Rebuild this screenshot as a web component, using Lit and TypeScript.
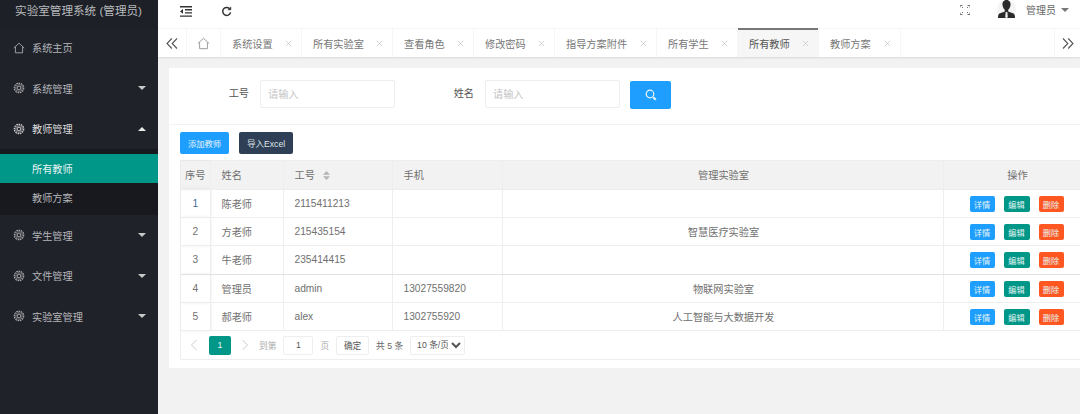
import { LitElement, html, css } from "lit";
import { customElement } from "lit/decorators.js";

const gear = html`<svg class="mi" viewBox="0 0 12 12" fill="none" stroke="currentColor">
  <circle cx="6" cy="6" r="1.9" stroke-width="1"/>
  <g stroke-width="1.2" stroke-dasharray="1.6 .75"><circle cx="6" cy="6" r="4.7"/></g>
  <circle cx="6" cy="6" r="3.4" stroke-width=".6"/>
</svg>`;
const home = html`<svg class="mi" viewBox="0 0 12 12" fill="none" stroke="currentColor" stroke-width=".9"><path d="M.8 6 6 1.2 11.2 6M2.400 5v5.800h7.200V5"/></svg>`;
const caret = (up = false) => html`<span class="caret ${up ? "up" : ""}"></span>`;
const x = html`<svg class="x" viewBox="0 0 8 8" stroke="#c8c8c8" stroke-width=".9"><path d="M1 1l6 6M7 1 1 7"/></svg>`;

const tabs = [
  ["系统设置", 81], ["所有实验室", 91], ["查看角色", 81], ["修改密码", 81],
  ["指导方案附件", 102], ["所有学生", 81], ["所有教师", 81], ["教师方案", 82],
] as [string, number][];

const rows = [
  ["1", "陈老师", "2115411213", "", ""],
  ["2", "方老师", "215435154", "", "智慧医疗实验室"],
  ["3", "牛老师", "235414415", "", ""],
  ["4", "管理员", "admin", "13027559820", "物联网实验室"],
  ["5", "郝老师", "alex", "1302755920", "人工智能与大数据开发"],
];

@customElement("app-root")
export class AppRoot extends LitElement {
  static styles = css`
    :host { display: block; width: 1080px; height: 414px; overflow: hidden; font-family: "Liberation Sans", "Noto Sans CJK SC", sans-serif; font-size: 10.2px; color: #666; }
    .shell { display: flex; height: 414px; }
    .side { width: 158px; flex: none; background: #20222a; color: #b4b5b8; }
    .brand { height: 27.5px; background: #1d2027; display: flex; align-items: center; justify-content: center; padding: 0 1px 7px 0; box-sizing: border-box; font-size: 11.6px; color: #b9babd; white-space: nowrap; }
    .mi { width: 12px; height: 12px; flex: none; color: #a9aaad; }
    .item { height: 40.5px; display: flex; align-items: center; padding: 0 11px 0 13px; gap: 7px; }
    .item.open { color: #dcdcdd; }
    .item.open .mi { color: #d0d0d0; }
    .item span.t { flex: 1; }
    .caret { width: 0; height: 0; border: 4.5px solid transparent; border-top-color: #c8c8c8; border-bottom: 0; margin-right: 1px; }
    .caret.up { border-top: 0; border-bottom: 4.5px solid #e8e8e8; }
    .sub { background: #18191f; padding: 5px 0 3px; }
    .sub div { height: 29px; display: flex; align-items: center; padding: 0 0 1px 32px; box-sizing: border-box; }
    .sub .on { background: #009688; color: #e8f4f2; }

    .main { width: 922px; flex: none; background: #f2f2f2; overflow: hidden; }
    .top { height: 28px; background: #fff; display: flex; align-items: center; }
    .top .left { display: flex; gap: 29px; padding: 0 0 5px 22px; align-items: center; }
    .top .right { margin-left: auto; display: flex; align-items: center; padding: 0 11px 9px 0; }
    .top svg { display: block; }
    .avatar { margin: 0 10px 0 27px; }
    .user { font-size: 10px; margin-right: 5px; color: #666; }
    .user-caret { width: 0; height: 0; border: 4px solid transparent; border-top-color: #777; border-bottom: 0; }

    .tabs { height: 29px; background: #fff; display: flex; box-shadow: 0 1px 2px rgba(0,0,0,.1); border-top: 1px solid #f6f6f6; box-sizing: border-box; }
    .arrow { width: 29px; flex: none; display: flex; align-items: center; justify-content: center; border-right: 1px solid #f6f6f6; box-sizing: border-box; }
    .tab-home { width: 34px; flex: none; display: flex; align-items: center; justify-content: center; border-right: 1px solid #f6f6f6; box-sizing: border-box; }
    .tab-home .mi { width: 13px; height: 13px; color: #999; }
    .tab { flex: none; box-sizing: border-box; display: flex; align-items: center; padding-left: 11px; border-right: 1px solid #f6f6f6; color: #777; white-space: nowrap; position: relative; }
    .tab .x { width: 7px; height: 7px; position: absolute; right: 9px; top: 11px; }
    .tab.on { background: #f6f6f6; color: #555; }
    .tab.on::before { content: ""; position: absolute; left: 0; right: 0; top: -1px; height: 2px; background: #777; }
    .spacer { flex: 1; }
    .arrow.r { width: 26px; border-right: 0; border-left: 1px solid #f6f6f6; }

    .card { width: 935px; height: 300px; margin: 11px 0 0 11px; background: #fff; box-sizing: border-box; padding-top: 12px; }
    .search { height: 44px; border-bottom: 1px solid #f2f2f2; display: flex; align-items: flex-start; }
    .lab { width: 91px; line-height: 27px; text-align: right; padding-right: 11px; box-sizing: border-box; color: #555; flex: none; }
    .lab.b { width: 90px; }
    input { box-sizing: border-box; font: inherit; border: 1px solid #eee; border-radius: 2px; outline: none; color: #555; background: #fff; }
    input::placeholder { color: #c4c4c4; }
    .inp { width: 135px; height: 28px; padding: 0 7px; flex: none; }
    .go { width: 41px; height: 28px; margin: 1px 0 0 10px; background: #1e9fff; border: 0; border-radius: 2px; display: flex; align-items: center; justify-content: center; padding: 0; }
    .tools { display: flex; gap: 10px; padding: 7px 0 0 11px; }
    .btn { height: 22px; display: flex; align-items: center; justify-content: center; border-radius: 2px; color: #e9f3fa; font-size: 8.3px; }
    .add { width: 49px; background: #1e9fff; }
    .imp { width: 54px; background: #2f4056; color: #dfe3e8; font-size: 8.6px; }

    .wrap { margin: 6px 0 0 11px; width: 913px; border: 1px solid #eee; border-right: 0; box-sizing: border-box; }
    table { border-collapse: collapse; table-layout: fixed; width: 911px; }
    th, td { border-bottom: 1px solid #eee; border-right: 1px solid #eee; height: 28.4px; padding: 0 0 0 11px; box-sizing: border-box; font-weight: 400; text-align: left; color: #707070; white-space: nowrap; }
    th { background: #f2f2f2; height: 28px; color: #6f6f6f; }
    tbody tr:nth-child(3) td { border-bottom: 1px solid #e2e2e2; }
    .c { text-align: center; padding: 0; }
    .lab-col { padding-left: 2px; }
    .first { box-shadow: 1px 0 3px rgba(0,0,0,.08); text-align: center; padding: 0; color: #707070; }
    tr:first-child .first { color: #3b6f95; }
    thead tr:first-child .first { color: #6f6f6f; }
    .sort { display: inline-block; vertical-align: -1px; margin-left: 8px; }
    .acts { padding: 1px 0 0; }
    .ops { display: flex; gap: 9px; padding-left: 26px; align-items: center; }
    .op { width: 25px; height: 16px; border-radius: 2px; color: #e6f4f2; font-size: 8.2px; display: flex; align-items: center; justify-content: center; }
    .op.i { background: #1e9fff; }
    .op.e { background: #009688; width: 26px; }
    .op.d { background: #ff5722; }

    .pager { height: 28px; display: flex; align-items: center; color: #888; font-size: 8.7px; padding-left: 24px; box-sizing: border-box; }
    .pg { width: 22px; height: 19px; background: #009688; color: #eaf6f4; border-radius: 2px; display: flex; align-items: center; justify-content: center; margin-right: 9px; }
    .chev { width: 8px; height: 12px; flex: none; }
    .chev.p { margin: 0 11px 0 -15px; }
    .chev.n { margin: 0 10px 0 1px; }
    .muted { color: #aaa; }
    .total { color: #666; }
    .pager input { width: 30px; height: 19px; text-align: center; margin: 0 7px; font-size: 8.7px; color: #555; padding: 0; }
    .ok { width: 33px; height: 19px; border: 1px solid #eee; border-radius: 2px; box-sizing: border-box; display: flex; align-items: center; justify-content: center; margin: 0 7px; color: #555; }
    select { width: 55px; height: 19px; margin-left: 7px; font: inherit; color: #555; background: #fff; border: 1px solid #eee; border-radius: 2px; outline: none; padding: 0 0 0 2px; }
  `;

  render() {
    return html`<div class="shell">
      <aside class="side">
        <div class="brand">实验室管理系统 (管理员)</div>
        <div class="item">${home}<span class="t">系统主页</span></div>
        <div class="item">${gear}<span class="t">系统管理</span>${caret()}</div>
        <div class="item open">${gear}<span class="t">教师管理</span>${caret(true)}</div>
        <div class="sub"><div class="on">所有教师</div><div>教师方案</div></div>
        <div class="item">${gear}<span class="t">学生管理</span>${caret()}</div>
        <div class="item">${gear}<span class="t">文件管理</span>${caret()}</div>
        <div class="item">${gear}<span class="t">实验室管理</span>${caret()}</div>
      </aside>
      <main class="main">
        <div class="top">
          <div class="left">
            <svg width="12" height="11" viewBox="0 0 12 11" fill="#333"><path d="M0 0h12v1.400H0zM5 3h7v1.400H5zM5 6.200h7v1.400H5zM0 9.400h12v1.400H0zM0 5.400 3 3v4.800z"/></svg>
            <svg width="11" height="11" viewBox="0 0 11 11" fill="none" stroke="#333" stroke-width="1.500"><path d="M9.200 3.400A4 4 0 1 0 9.600 6.400"/><path d="M9.800.8v3H6.800" fill="#333" stroke-width=".6"/></svg>
          </div>
          <div class="right">
            <svg width="10" height="10" viewBox="0 0 10 10" fill="none" stroke="#777"><path d="M0 2.500V.5h2.500M7.500.5H10v2M10 7.500v2H7.500M2.500 9.500H0v-2M2 2l1 1M8 2 7 3M8 8 7 7M2 8l1-1"/></svg>
            <svg class="avatar" width="19" height="21" viewBox="0 0 19 21"><circle cx="9.500" cy="10.500" r="9.500" fill="#f4f4f4"/><path d="M9.500 1c3 0 4.300 2.400 4 5-.2 2-1.200 4-2.300 4.800v1.600l5.300 2.200c1 .5 1.500 2 1.500 4.400H1c0-2.400.5-3.900 1.500-4.400l5.300-2.200v-1.600C6.700 10 5.700 8 5.500 6 5.200 3.400 6.500 1 9.500 1z" fill="#2b2b2b"/><path d="M8.700 13h1.600l.5 5-1.300 1.500L8.200 18z" fill="#eee"/></svg>
            <span class="user">管理员</span><span class="user-caret"></span>
          </div>
        </div>
        <div class="tabs">
          <div class="arrow"><svg width="12" height="11" viewBox="0 0 12 11" fill="none" stroke="#555" stroke-width="1.100"><path d="M5.800 .5 1 5.500l4.800 5M11 .5 6.200 5.500l4.800 5"/></svg></div>
          <div class="tab-home">${home}</div>
          ${tabs.map(([t, w]) => html`<div class="tab ${t === "所有教师" ? "on" : ""}" style="width:${w}px">${t}${x}</div>`)}
          <div class="spacer"></div>
          <div class="arrow r"><svg width="12" height="11" viewBox="0 0 12 11" fill="none" stroke="#555" stroke-width="1.100"><path d="M6.200 .5l4.800 5-4.800 5M1 .5l4.800 5-4.800 5"/></svg></div>
        </div>
        <section class="card">
          <div class="search">
            <span class="lab">工号</span><input class="inp" placeholder="请输入" />
            <span class="lab b">姓名</span><input class="inp" placeholder="请输入" />
            <button class="go" aria-label="搜索"><svg width="12" height="12" viewBox="0 0 12 12" fill="none" stroke="#e8f5ff"><circle cx="5" cy="5" r="3.800" stroke-width="1.200"/><path d="M8.200 8.200l2.600 2.600" stroke-width="2"/></svg></button>
          </div>
          <div class="tools"><div class="btn add">添加教师</div><div class="btn imp">导入Excel</div></div>
          <div class="wrap">
            <table>
              <colgroup><col style="width:29px"/><col style="width:73px"/><col style="width:109px"/><col style="width:110px"/><col style="width:441px"/><col style="width:149px"/></colgroup>
              <thead><tr>
                <th class="first">序号</th><th>姓名</th>
                <th>工号<svg class="sort" width="7" height="9" viewBox="0 0 7 9" fill="#b5b5b5"><path d="M3.500 0 7 3.700H0zM0 5.300h7L3.500 9z"/></svg></th>
                <th>手机</th><th class="c lab-col">管理实验室</th><th class="c">操作</th>
              </tr></thead>
              <tbody>
                ${rows.map((r) => html`<tr>
                  <td class="first">${r[0]}</td><td>${r[1]}</td><td>${r[2]}</td><td>${r[3]}</td><td class="c lab-col">${r[4]}</td>
                  <td class="acts"><div class="ops"><div class="op i">详情</div><div class="op e">编辑</div><div class="op d">删除</div></div></td>
                </tr>`)}
              </tbody>
            </table>
            <div class="pager">
              <svg class="chev p" viewBox="0 0 8 12" fill="none" stroke="#ccc"><path d="M6.500 1 1.500 6l5 5"/></svg>
              <div class="pg">1</div>
              <svg class="chev n" viewBox="0 0 8 12" fill="none" stroke="#ccc"><path d="M1.500 1l5 5-5 5"/></svg>
              <span class="muted">到第</span><input value="1" /><span class="muted">页</span>
              <div class="ok">确定</div><span class="total">共 5 条</span>
              <select><option>10 条/页</option></select>
            </div>
          </div>
        </section>
      </main>
    </div>`;
  }
}
